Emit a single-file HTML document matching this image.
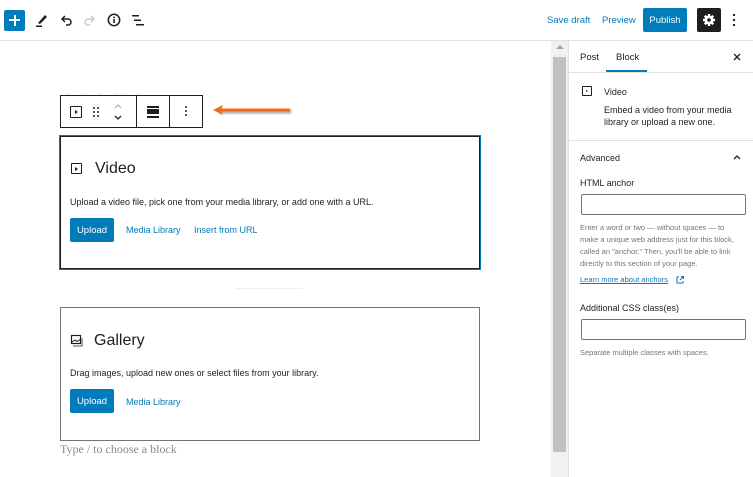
<!DOCTYPE html>
<html><head><style>
*{box-sizing:border-box;margin:0;padding:0}
body{width:753px;height:477px;overflow:hidden;background:#fff;font-family:"Liberation Sans",sans-serif;position:relative;color:#1e1e1e}
.a{position:absolute}
.blue{color:#007cba}
.btn{background:#007cba;color:#fff;font-size:9.5px;border-radius:2px;display:flex;align-items:center;justify-content:center}
.s{font-size:9px}
</style></head><body>
<!-- top bar -->
<div class="a" style="left:0;top:40px;width:753px;height:1px;background:#e0e0e0"></div>
<div class="a" style="left:4px;top:10px;width:21px;height:21px;background:#007cba;border-radius:2px"></div>
<div class="a" style="left:9px;top:19px;width:11px;height:2px;background:#fff"></div>
<div class="a" style="left:13.5px;top:15px;width:2px;height:11px;background:#fff"></div>
<svg class="a" style="left:34px;top:12px" width="16" height="16" viewBox="0 0 16 16"><path d="M4 11 L11 3 L13 5 L6 12Z" fill="#1e1e1e"/><rect x="2" y="13.5" width="6" height="1.5" fill="#1e1e1e"/></svg>
<svg class="a" style="left:58px;top:12px" width="16" height="16" viewBox="0 0 16 16"><path d="M4 7 H10 A3 3 0 0 1 10 13 H8 M7 4 L4 7 L7 10" fill="none" stroke="#1e1e1e" stroke-width="1.5"/></svg>
<svg class="a" style="left:82px;top:12px" width="16" height="16" viewBox="0 0 16 16"><path d="M12 7 H6 A3 3 0 0 0 6 13 H8 M9 4 L12 7 L9 10" fill="none" stroke="#ccc" stroke-width="1.5"/></svg>
<svg class="a" style="left:106px;top:12px" width="16" height="16" viewBox="0 0 16 16"><circle cx="8" cy="8" r="5.7" fill="none" stroke="#1e1e1e" stroke-width="1.5"/><rect x="7.2" y="7" width="1.6" height="4" fill="#1e1e1e"/><rect x="7.2" y="4.6" width="1.6" height="1.5" fill="#1e1e1e"/></svg>
<svg class="a" style="left:130px;top:12px" width="16" height="16" viewBox="0 0 16 16"><rect x="2" y="3" width="7" height="1.5" fill="#1e1e1e"/><rect x="4" y="7.5" width="7" height="1.5" fill="#1e1e1e"/><rect x="6" y="12" width="8" height="1.5" fill="#1e1e1e"/></svg>
<div class="a blue" style="left:547px;top:15px;font-size:9.5px">Save draft</div>
<div class="a blue" style="left:602px;top:15px;font-size:9.5px">Preview</div>
<div class="a btn" style="left:643px;top:8px;width:44px;height:24px">Publish</div>
<div class="a" style="left:697px;top:8px;width:24px;height:24px;background:#1e1e1e;border-radius:2px"></div>
<svg class="a" style="left:701px;top:12px" width="16" height="16" viewBox="0 0 16 16"><g fill="#fff"><circle cx="8" cy="8" r="4.5"/><rect x="6.8" y="2" width="2.4" height="12"/><rect x="2" y="6.8" width="12" height="2.4"/><rect x="6.8" y="2" width="2.4" height="12" transform="rotate(45 8 8)"/><rect x="6.8" y="2" width="2.4" height="12" transform="rotate(-45 8 8)"/></g><circle cx="8" cy="8" r="1.8" fill="#1e1e1e"/></svg>
<div class="a" style="left:733px;top:14px;width:2px;height:2px;background:#1e1e1e;box-shadow:0 5px #1e1e1e,0 10px #1e1e1e"></div>

<!-- toolbar -->
<div class="a" style="left:64px;top:90px;font-size:16px;color:#bbb;letter-spacing:3px">o ı ı ıı ı</div>
<div class="a" style="left:60px;top:95px;width:143px;height:33px;border:1px solid #1e1e1e;background:#fff"></div>
<div class="a" style="left:136px;top:95px;width:1px;height:33px;background:#1e1e1e"></div>
<div class="a" style="left:169px;top:95px;width:1px;height:33px;background:#1e1e1e"></div>
<div class="a" style="left:70px;top:106px;width:12px;height:12px;border:1.3px solid #1e1e1e;border-radius:1px"></div>
<div class="a" style="left:75px;top:110px;width:0;height:0;border-left:3px solid #1e1e1e;border-top:2px solid transparent;border-bottom:2px solid transparent"></div>
<div class="a" style="left:93px;top:107px;width:2px;height:2px;background:#555;box-shadow:4px 0 #555,0 4px #555,4px 4px #555,0 8px #555,4px 8px #555"></div>
<svg class="a" style="left:112px;top:102px" width="12" height="20" viewBox="0 0 12 20"><path d="M3 6 L6 3 L9 6" fill="none" stroke="#aaa" stroke-width="1.2"/><path d="M3 14 L6 17 L9 14" fill="none" stroke="#1e1e1e" stroke-width="1.3"/></svg>
<div class="a" style="left:147px;top:106px;width:12px;height:2px;background:#1e1e1e"></div>
<div class="a" style="left:147px;top:109px;width:12px;height:5px;background:#1e1e1e"></div>
<div class="a" style="left:147px;top:116px;width:12px;height:2px;background:#1e1e1e"></div>
<div class="a" style="left:185px;top:106px;width:2px;height:2px;background:#555;box-shadow:0 4px #555,0 8px #555"></div>
<svg class="a" style="left:205px;top:100px" width="90" height="22"><path d="M14 10 H84" stroke="#f26c1d" stroke-width="3" stroke-linecap="round" filter="drop-shadow(1px 2px 1px rgba(0,0,0,.35))"/><path d="M8 10 L18 5 L16 10 L18 15Z" fill="#f26c1d"/></svg>

<!-- video block -->
<div class="a" style="left:59px;top:135px;width:422px;height:135px;border:1px solid #007cba;box-shadow:inset 0 0 0 1px #1e1e1e"></div>
<div class="a" style="left:71px;top:163px;width:11px;height:11px;border:1.3px solid #1e1e1e;border-radius:1px"></div>
<div class="a" style="left:75px;top:166.5px;width:0;height:0;border-left:3px solid #1e1e1e;border-top:2px solid transparent;border-bottom:2px solid transparent"></div>
<div class="a" style="left:95px;top:160px;font-size:16px">Video</div>
<div class="a s" style="left:70px;top:197px">Upload a video file, pick one from your media library, or add one with a URL.</div>
<div class="a btn" style="left:70px;top:218px;width:44px;height:24px">Upload</div>
<div class="a blue s" style="left:126px;top:225px">Media Library</div>
<div class="a blue s" style="left:194px;top:225px">Insert from URL</div>
<div class="a" style="left:236px;top:288px;width:67px;height:1px;background:#eee"></div>

<!-- gallery block -->
<div class="a" style="left:60px;top:307px;width:420px;height:134px;border:1px solid #757575"></div>
<svg class="a" style="left:70px;top:334px" width="14" height="14" viewBox="0 0 14 14"><rect x="1.5" y="1.5" width="9" height="8" fill="none" stroke="#1e1e1e" stroke-width="1.2"/><path d="M2 8 L5 6 L7 7.5 L10 5.5" fill="none" stroke="#1e1e1e" stroke-width="1"/><path d="M3 12 H12 V4" fill="none" stroke="#777" stroke-width="1.3"/></svg>
<div class="a" style="left:94px;top:332px;font-size:16px">Gallery</div>
<div class="a s" style="left:70px;top:368px">Drag images, upload new ones or select files from your library.</div>
<div class="a btn" style="left:70px;top:389px;width:44px;height:24px">Upload</div>
<div class="a blue s" style="left:126px;top:397px">Media Library</div>
<div class="a" style="left:60px;top:442px;font-size:12px;color:#8a8a8a;font-family:'Liberation Serif',serif">Type / to choose a block</div>

<!-- scrollbar -->
<div class="a" style="left:551px;top:41px;width:17px;height:436px;background:#f1f1f1"></div>
<div class="a" style="left:556px;top:45px;width:0;height:0;border-bottom:4px solid #a3a3a3;border-left:4px solid transparent;border-right:4px solid transparent"></div>
<div class="a" style="left:553px;top:57px;width:13px;height:395px;background:#c1c1c1"></div>
<div class="a" style="left:568px;top:41px;width:1px;height:436px;background:#e0e0e0"></div>

<!-- sidebar -->
<div class="a" style="left:569px;top:72px;width:184px;height:1px;background:#e0e0e0"></div>
<div class="a s" style="left:580px;top:52px;font-size:9.5px">Post</div>
<div class="a s" style="left:616px;top:52px;font-size:9.5px">Block</div>
<div class="a" style="left:606px;top:70px;width:41px;height:2px;background:#007cba"></div>
<svg class="a" style="left:732px;top:52px" width="10" height="10" viewBox="0 0 10 10"><path d="M2 2 L8 8 M8 2 L2 8" stroke="#1e1e1e" stroke-width="1.3"/></svg>
<div class="a" style="left:582px;top:86px;width:10px;height:10px;border:1.2px solid #1e1e1e;border-radius:1px"></div>
<div class="a" style="left:586px;top:89.5px;width:0;height:0;border-left:2.5px solid #1e1e1e;border-top:1.5px solid transparent;border-bottom:1.5px solid transparent"></div>
<div class="a s" style="left:604px;top:87px">Video</div>
<div class="a s" style="left:604px;top:104px;line-height:12px">Embed a video from your media<br>library or upload a new one.</div>
<div class="a" style="left:569px;top:140px;width:184px;height:1px;background:#e0e0e0"></div>
<div class="a s" style="left:580px;top:153px">Advanced</div>
<svg class="a" style="left:732px;top:153px" width="10" height="8" viewBox="0 0 10 8"><path d="M2 6 L5 3 L8 6" fill="none" stroke="#1e1e1e" stroke-width="1.3"/></svg>
<div class="a s" style="left:580px;top:178px">HTML anchor</div>
<div class="a" style="left:581px;top:194px;width:165px;height:21px;border:1px solid #757575;border-radius:2px"></div>
<div class="a" style="left:580px;top:222px;font-size:7.5px;color:#757575;line-height:12px">Enter a word or two — without spaces — to<br>make a unique web address just for this block,<br>called an "anchor." Then, you'll be able to link<br>directly to this section of your page.</div>
<div class="a blue" style="left:580px;top:275px;font-size:7.5px;text-decoration:underline">Learn more about anchors</div>
<svg class="a" style="left:675px;top:275px" width="10" height="10" viewBox="0 0 10 10"><path d="M4 2 H2 V8 H8 V6 M5 5 L8.5 1.5 M6 1.5 H8.5 V4" fill="none" stroke="#007cba" stroke-width="1"/></svg>
<div class="a s" style="left:580px;top:303px">Additional CSS class(es)</div>
<div class="a" style="left:581px;top:319px;width:165px;height:21px;border:1px solid #757575;border-radius:2px"></div>
<div class="a" style="left:580px;top:348px;font-size:7.5px;color:#757575">Separate multiple classes with spaces.</div>
</body></html>
